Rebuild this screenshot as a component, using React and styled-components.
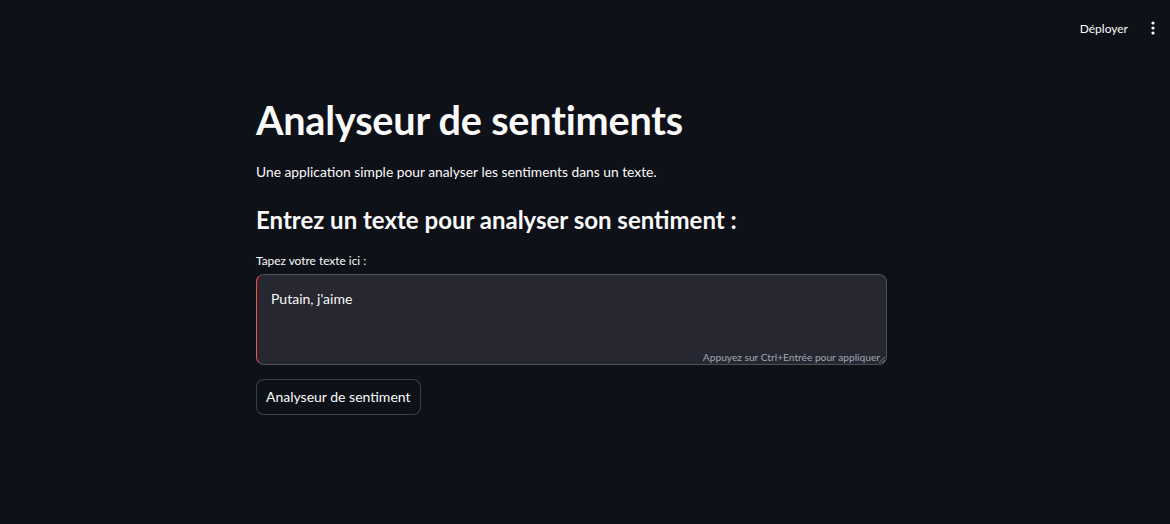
import React from 'react'
import styled, { createGlobalStyle } from 'styled-components'

const GlobalStyle = createGlobalStyle`
    html, body {
        margin: 0;
        padding: 0;
        background: #0e1117;
        color: #fafafa;
        font-family: Lato, 'Open Sans', sans-serif;
    }
`

const Page = styled.div`
    min-height: 524px;
    display: flex;
    flex-direction: column;
`

const Header = styled.header`
    height: 56px;
    display: flex;
    align-items: center;
    justify-content: flex-end;
    gap: 11px;
    padding: 0 3px 0 0;
`

const DeployButton = styled.button`
    background: none;
    border: none;
    color: #fafafa;
    font-family: inherit;
    font-size: 12px;
    padding: 0;
`

const MenuButton = styled.button`
    background: none;
    border: none;
    width: 28px;
    height: 28px;
    display: flex;
    align-items: center;
    justify-content: center;
    padding: 0;
`

const Main = styled.main`
    width: 631px;
    margin-left: 256px;
    padding-top: 39px;
    display: flex;
    flex-direction: column;
`

const Title = styled.h1`
    margin: 0;
    font-size: 39.6px;
    font-weight: 700;
    line-height: 50px;
    letter-spacing: -0.2px;
`

const Intro = styled.p`
    margin: 15px 0 0;
    font-size: 13.8px;
    line-height: 24px;
`

const Subtitle = styled.h3`
    margin: 20px 0 0;
    font-size: 24px;
    font-weight: 700;
    line-height: 32px;
`

const Label = styled.label`
    margin-top: 16px;
    font-size: 11.9px;
    line-height: 18px;
`

const Field = styled.div`
    position: relative;
    margin-top: 4px;
    height: 91px;
    box-sizing: border-box;
    background: #262730;
    border: 1px solid #4e505a;
    border-left-color: #ff4b4b;
    border-radius: 8px;
    padding: 12px 14px;
`

const Text = styled.div`
    font-size: 14px;
    line-height: 24px;
`

const Hint = styled.span`
    position: absolute;
    right: 6px;
    bottom: 1px;
    font-size: 10.2px;
    color: #a3a8b4;
`

const Grip = styled.svg`
    position: absolute;
    right: 1px;
    bottom: 1px;
`

const SubmitButton = styled.button`
    align-self: flex-start;
    margin-top: 14px;
    height: 36px;
    padding: 0 9px 2px;
    background: #0e1117;
    color: #fafafa;
    border: 1px solid rgba(250, 250, 250, 0.2);
    border-radius: 8px;
    font-family: inherit;
    font-size: 14px;
`

const App = () => {
    return (
        <Page>
            <GlobalStyle />
            <Header>
                <DeployButton>Déployer</DeployButton>
                <MenuButton aria-label='menu'>
                    <svg width='4' height='14' viewBox='0 0 4 14'>
                        <circle cx='2' cy='2' r='1.6' fill='#fafafa' />
                        <circle cx='2' cy='7' r='1.6' fill='#fafafa' />
                        <circle cx='2' cy='12' r='1.6' fill='#fafafa' />
                    </svg>
                </MenuButton>
            </Header>
            <Main>
                <Title>Analyseur de sentiments</Title>
                <Intro>Une application simple pour analyser les sentiments dans un texte.</Intro>
                <Subtitle>Entrez un texte pour analyser son sentiment :</Subtitle>
                <Label>Tapez votre texte ici :</Label>
                <Field>
                    <Text>Putain, j'aime</Text>
                    <Hint>Appuyez sur Ctrl+Entrée pour appliquer</Hint>
                    <Grip width='6' height='6' viewBox='0 0 6 6'>
                        <path d='M6 0 L0 6 M6 3 L3 6' stroke='#8a8d96' strokeWidth='0.8' />
                    </Grip>
                </Field>
                <SubmitButton>Analyseur de sentiment</SubmitButton>
            </Main>
        </Page>
    )
}

export default App
